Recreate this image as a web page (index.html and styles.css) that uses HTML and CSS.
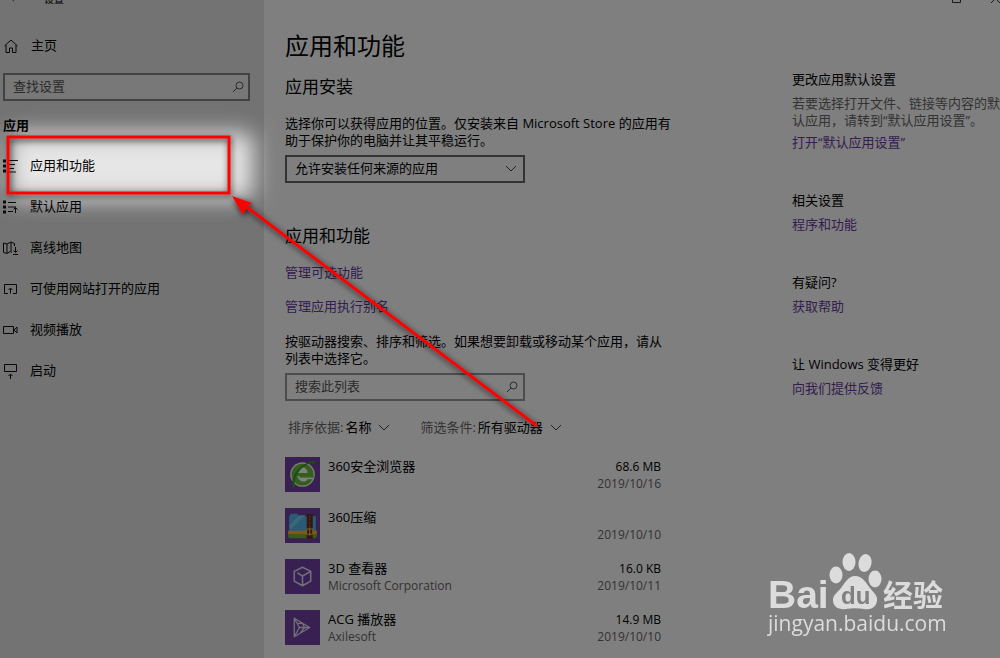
FILE: index.html
```html
<!DOCTYPE html>
<html lang="zh-CN">
<head>
<meta charset="utf-8">
<meta name="viewport" content="width=device-width, initial-scale=1">
<title>设置</title>
<link rel="stylesheet" href="styles.css">
</head>
<body>
<div class="window">
  <nav class="sidebar">
    <div class="titlebar">
      <svg class="back" width="8" height="10" viewBox="0 0 8 10"><path d="M7 1 2 5l5 4" fill="none" stroke="#555"/></svg>
      <span class="titlebar-text">设置</span>
    </div>
    <a class="nav-item home" href="#">
      <svg class="icon" viewBox="0 0 16 16"><path d="M1.500 8 8 2l6.500 6M3 7v7.500h3.500V10h3v4.500H13V7"/></svg>
      <span>主页</span>
    </a>
    <label class="search search-settings">
      <input type="text" placeholder="查找设置" aria-label="查找设置">
      <svg class="glass" viewBox="0 0 12 12"><circle cx="7.500" cy="4.500" r="3.500"/><path d="M5 7 1 11"/></svg>
    </label>
    <h2 class="nav-title">应用</h2>
    <a class="nav-item" href="#">
      <svg class="icon" viewBox="0 0 16 16"><path d="M7 2.500h9M7 6.500h6M7 10.500h5M7 14h7"/><path class="dots" d="M2.500 1.500v13"/></svg>
      <span>应用和功能</span>
    </a>
    <a class="nav-item" href="#">
      <svg class="icon" viewBox="0 0 16 16"><path d="M6 3.500h8M6 8h8M6 12.500h5M13.500 14V8.500M11.500 10.500l2-2 2 2"/><path class="dots" d="M2.500 1.500v13"/></svg>
      <span>默认应用</span>
    </a>
    <a class="nav-item" href="#">
      <svg class="icon" viewBox="0 0 16 16"><path d="M10 12.500 8.500 11.500 5 13.500 1.500 12.500V3L5 4l4-2 3.500 1.500V6M5 4v9M9 2v9.500M13.500 7v5M11.500 10.500l2 2 2-2M11 14.500h5"/></svg>
      <span>离线地图</span>
    </a>
    <a class="nav-item" href="#">
      <svg class="icon" viewBox="0 0 16 16"><path d="M6 12.500H2.500v-9h12v9H11M8.500 12.500V7M6.500 9l2-2 2 2"/></svg>
      <span>可使用网站打开的应用</span>
    </a>
    <a class="nav-item" href="#">
      <svg class="icon" viewBox="0 0 16 16"><path d="M1.500 4.500h10v7h-10zM12 8l3-3v6z"/></svg>
      <span>视频播放</span>
    </a>
    <a class="nav-item" href="#">
      <svg class="icon" viewBox="0 0 16 16"><path d="M2.500 1.500h12v7h-12zM8.500 16v-5M6.500 13l2-2 2 2"/></svg>
      <span>启动</span>
    </a>
  </nav>

  <main class="content">
    <div class="titlebar"></div>
    <h1 class="page-title">应用和功能</h1>
    <h2 class="section-title">应用安装</h2>
    <p class="text" id="source-help">选择你可以获得应用的位置。仅安装来自 Microsoft Store 的应用有助于保护你的电脑并让其平稳运行。</p>
    <div class="combo">
      <select aria-labelledby="source-help"><option>允许安装任何来源的应用</option></select>
      <svg class="chevron" viewBox="0 0 12 8"><path d="m1 1 5 5 5-5"/></svg>
    </div>

    <h2 class="section-title section-apps">应用和功能</h2>
    <div class="links">
      <a class="link" href="#">管理可选功能</a>
      <a class="link" href="#">管理应用执行别名</a>
    </div>
    <p class="text">按驱动器搜索、排序和筛选。如果想要卸载或移动某个应用，请从列表中选择它。</p>
    <label class="search search-list">
      <input type="text" placeholder="搜索此列表" aria-label="搜索此列表">
      <svg class="glass" viewBox="0 0 12 12"><circle cx="7.500" cy="4.500" r="3.500"/><path d="M5 7 1 11"/></svg>
    </label>
    <div class="filters">
      <div class="filter">
        <label for="sort">排序依据:</label>
        <select id="sort"><option>名称</option></select>
        <svg class="chevron" viewBox="0 0 12 8"><path d="m1 1 5 5 5-5"/></svg>
      </div>
      <div class="filter">
        <label for="drive">筛选条件:</label>
        <select id="drive"><option>所有驱动器</option></select>
        <svg class="chevron" viewBox="0 0 12 8"><path d="m1 1 5 5 5-5"/></svg>
      </div>
    </div>

    <ul class="apps">
      <li class="app">
        <svg class="app-icon" viewBox="0 0 34 34">
          <circle cx="17" cy="17" r="12" fill="#eef5ea"/>
          <circle cx="17" cy="17" r="10.500" fill="#66bd38"/>
          <path d="M12 15.500a5 5.500 0 0 1 10 0z" fill="#fff"/>
          <path d="M12 18.500h16v3H22c-1.500 3.500-8.500 3.500-10-3z" fill="#fff"/>
          <path d="M14 18.500h14v1.500H14z" fill="#66bd38"/>
          <path d="M8 30C4 20 14 5 29 4c0 2-1 3-2 4 0-1 0-2-1-2C17 7 8 18 9.500 29z" fill="#3f9a2c"/>
        </svg>
        <div class="app-name"><span>360安全浏览器</span></div>
        <div class="app-meta"><span>68.6 MB</span><span class="muted">2019/10/16</span></div>
      </li>
      <li class="app">
        <svg class="app-icon" viewBox="0 0 34 34">
          <path d="M4 8l2-2.500h6L14 8h16v16H4z" fill="#52b6ec"/>
          <path d="M5 21 20 7h-6L4 17z" fill="#7bcdf3"/>
          <path d="M3 22h28v4H3z" fill="#f5b824"/>
          <path d="M3 25.500h28V28l-1.500 1.500h-25L3 28z" fill="#72b62a"/>
          <path d="M21 6h6v24h-6z" fill="#713018"/>
          <path d="M24 8v10" stroke="#d39a50" stroke-dasharray="1 2"/>
          <path d="M21 20.500h6v5h-6zM24 19v8" fill="none" stroke="#f1ba45" stroke-width="1"/>
        </svg>
        <div class="app-name"><span>360压缩</span></div>
        <div class="app-meta"><span></span><span class="muted">2019/10/10</span></div>
      </li>
      <li class="app">
        <svg class="app-icon" viewBox="0 0 34 34"><path d="m17 8 8 4v9.500L17 26l-8-4.500V12zM12 13.500l5 3 8-4.500M17 26v-9.500" fill="none" stroke="#e6dcf2" stroke-width="1.500" stroke-linejoin="round"/></svg>
        <div class="app-name"><span>3D 查看器</span><span class="muted latin">Microsoft Corporation</span></div>
        <div class="app-meta"><span>16.0 KB</span><span class="muted">2019/10/11</span></div>
      </li>
      <li class="app">
        <svg class="app-icon" viewBox="0 0 34 34"><path d="M9 8v18l15-9zM9 8l5 9-5 9M14 17h10M12 13h5l2 4-4 5" fill="none" stroke="#e6dcf2" stroke-width="1.300" stroke-linejoin="round"/></svg>
        <div class="app-name"><span>ACG 播放器</span><span class="muted latin">Axilesoft</span></div>
        <div class="app-meta"><span>14.9 MB</span><span class="muted">2019/10/10</span></div>
      </li>
    </ul>
  </main>

  <aside class="related">
    <div class="titlebar window-buttons">
      <svg width="9" height="9" viewBox="0 0 9 9"><path d="M.5.5h8v8h-8z" fill="none" stroke="#333"/></svg>
      <svg width="9" height="9" viewBox="0 0 9 9"><path d="m0 0 9 9M9 0 0 9" stroke="#333"/></svg>
    </div>
    <section class="related-group">
      <h3>更改应用默认设置</h3>
      <p class="muted">若要选择打开文件、链接等内容的默认应用，请转到“默认应用设置”。</p>
      <a class="link" href="#">打开“默认应用设置”</a>
    </section>
    <section class="related-group">
      <h3>相关设置</h3>
      <a class="link" href="#">程序和功能</a>
    </section>
    <section class="related-group">
      <h3>有疑问?</h3>
      <a class="link" href="#">获取帮助</a>
    </section>
    <section class="related-group">
      <h3>让 Windows 变得更好</h3>
      <a class="link" href="#">向我们提供反馈</a>
    </section>
  </aside>
</div>

<svg class="spotlight" aria-hidden="true">
  <defs>
    <filter id="soft" filterUnits="userSpaceOnUse" x="-60" y="80" width="400" height="180"><feGaussianBlur stdDeviation="11"/></filter>
    <filter id="shade" filterUnits="userSpaceOnUse" x="-20" y="100" width="600" height="360"><feDropShadow dx="1" dy="2" stdDeviation="3" flood-color="#000" flood-opacity=".8"/></filter>
    <mask id="hole" maskUnits="userSpaceOnUse" x="0" y="0" width="100%" height="100%">
      <rect width="100%" height="100%" fill="#fff"/>
      <rect x="8" y="133" width="245" height="66" rx="8" fill="#000" filter="url(#soft)"/>
    </mask>
  </defs>
  <rect width="100%" height="100%" fill="#000" fill-opacity=".5" mask="url(#hole)"/>
  <g filter="url(#shade)">
    <rect x="8" y="137" width="221" height="56" fill="none" stroke="#f00" stroke-width="3"/>
    <path d="M244 205 537 426" stroke="#f00" stroke-width="3"/>
    <path d="m232 196 20 7-6 5-3 7z" fill="#f00"/>
  </g>
</svg>

<svg class="watermark" viewBox="0 0 190 90" role="img" aria-label="Baidu 经验">
  <g class="mark">
    <text class="mark-latin" x="1" y="57">Bai</text>
    <ellipse cx="69" cy="24" rx="6.500" ry="8.500"/>
    <ellipse cx="82" cy="11" rx="6.500" ry="9"/>
    <ellipse cx="98" cy="12" rx="6.500" ry="9" transform="rotate(12 98 12)"/>
    <ellipse cx="108" cy="28" rx="6.500" ry="8.500"/>
    <path d="M88 25c8 0 11 7 15 12s8 8 7 13c-1 7-7 9-13 8-6-1-12-1-18 0-7 1-13-2-13-9 0-5 4-7 8-12s7-12 14-12z"/>
    <text class="mark-du" x="74" y="53">du</text>
    <text class="mark-cjk" x="116" y="55">经验</text>
    <text class="mark-url" x="1" y="80">jingyan.baidu.com</text>
  </g>
</svg>
</body>
</html>
```

FILE: styles.css
```css
* {
  box-sizing: border-box;
}

body {
  margin: 0;
  background: #fff;
  color: #000;
  font: 13px/17px "Open Sans", "Noto Sans CJK SC", sans-serif;
  overflow: hidden;
}

h1, h2, h3, p, ul {
  margin: 0;
  padding: 0;
  font-weight: 400;
}

h3 {
  font-size: 13px;
}

a {
  text-decoration: none;
}

input, select {
  margin: 0;
  padding: 0;
  border: 0;
  background: none;
  color: inherit;
  font: inherit;
  appearance: none;
  outline: 0;
}

svg {
  flex: none;
}

.window {
  display: flex;
  min-height: 100vh;
}

.titlebar {
  display: flex;
  align-items: flex-end;
  height: 4px;
  overflow: hidden;
}

.back {
  margin: 0 29px 2px 7px;
}

.titlebar-text {
  font-size: 10px;
  line-height: 10px;
}

/* Navigation */
.sidebar {
  flex: 0 0 264px;
  background: #e6e6e6;
}

.nav-item {
  display: flex;
  align-items: center;
  gap: 12px;
  height: 41px;
  padding-left: 2px;
  color: #000;
}

.home {
  margin: 21px 0 7px;
  padding-left: 3px;
}

.icon {
  width: 16px;
  height: 16px;
  fill: none;
  stroke: #111;
}

.dots {
  stroke-width: 3;
  stroke-dasharray: 3 2;
}

.nav-title {
  padding: 16px 3px 11px;
  font-size: 13px;
  font-weight: 700;
}

/* Fields */
.search, .combo {
  display: flex;
  align-items: center;
  height: 28px;
  padding: 0 6px 1px 8px;
  border: 2px solid #858585;
}

.search input, .combo select {
  flex: 1;
  min-width: 0;
}

.search input::placeholder {
  color: #555;
  opacity: 1;
}

.search-settings {
  margin: 0 14px 0 3px;
  padding-right: 4px;
  background: #f0f0f0;
}

.search-list, .combo {
  width: 240px;
}

.search-list {
  padding-right: 5px;
  border-color: #999;
}

.combo {
  border-color: #666;
}

.glass {
  width: 12px;
  height: 12px;
  fill: none;
  stroke: #555;
}

.chevron {
  width: 12px;
  height: 8px;
  fill: none;
  stroke: #444;
}

/* Main column */
.content {
  flex: 0 1 528px;
  padding-left: 21px;
}

.page-title {
  margin: 26px 0 13px;
  font-size: 24px;
  line-height: 32px;
}

.section-title {
  margin-bottom: 16px;
  font-size: 17px;
  line-height: 24px;
}

.section-apps {
  margin-top: 41px;
}

.text {
  max-width: 388px;
  margin-bottom: 6px;
}

.links {
  display: flex;
  flex-direction: column;
  align-items: flex-start;
  gap: 17px;
  margin-bottom: 18px;
}

.link {
  color: #6a3a9e;
}

.filters {
  display: flex;
  gap: 30px;
  margin: 18px 0 21px;
  padding-left: 3px;
}

.filter {
  display: flex;
  align-items: center;
  gap: 2px;
}

.filter label, .muted {
  color: #666;
}

.filter .chevron {
  margin-left: 4px;
}

.apps {
  display: grid;
  gap: 16px;
  max-width: 376px;
  list-style: none;
}

.app {
  display: flex;
  gap: 8px;
}

.app-icon {
  width: 35px;
  height: 35px;
  background: #7040a5;
}

.app-name, .app-meta {
  display: grid;
  grid-template-rows: 17px 17px;
  align-content: start;
  padding-top: 1px;
}

.app-name {
  flex: 1;
}

.app-meta {
  font-size: 12px;
  text-align: right;
}

.latin {
  font-size: 12px;
}

/* Related settings */
.related {
  flex: 1 0 208px;
}

.window-buttons {
  justify-content: flex-end;
  gap: 30px;
  height: 3px;
  margin-bottom: 68px;
}

.related-group {
  display: grid;
  justify-items: start;
  gap: 7px;
  margin-bottom: 41px;
}

.related-group p + .link {
  margin-top: -2px;
}

/* Layers above the page */
.spotlight {
  position: fixed;
  inset: 0;
  width: 100%;
  height: 100%;
  pointer-events: none;
}

.watermark {
  position: fixed;
  right: 43px;
  bottom: 17px;
  width: 190px;
  height: 90px;
  pointer-events: none;
}

.mark {
  fill: #dcdcdc;
}

.mark-latin {
  font: 700 39px "Liberation Sans", sans-serif;
}

.mark-du {
  fill: #808080;
  font: 700 24px "Liberation Sans", sans-serif;
}

.mark-cjk {
  font: 700 30px "Noto Sans CJK SC", sans-serif;
}

.mark-url {
  font: 21px "Open Sans", sans-serif;
}
```
